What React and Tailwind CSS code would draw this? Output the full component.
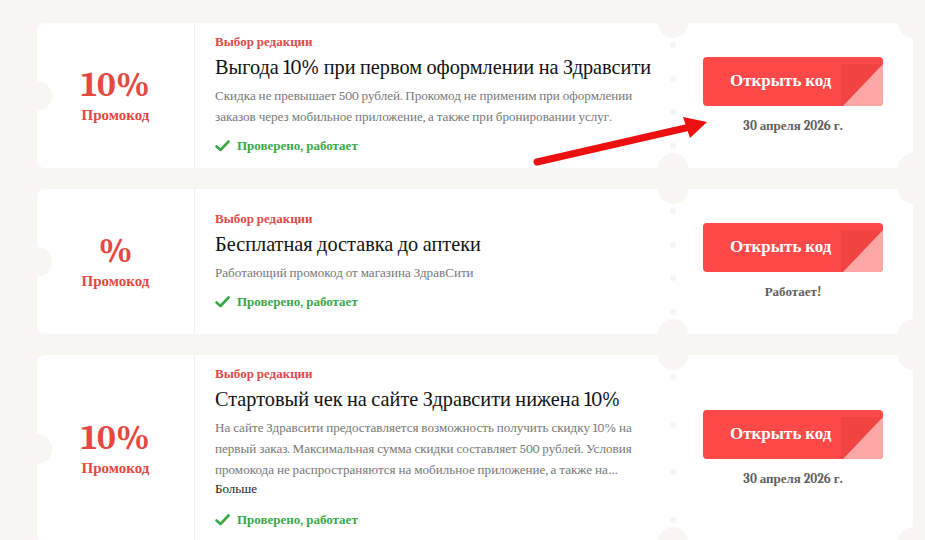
import React from 'react';

const coupons = [
  {
    value: '10%',
    label: 'Выбор редакции',
    title: 'Выгода 10% при первом оформлении на Здравсити',
    text: 'Скидка не превышает 500 рублей. Прокомод не применим при оформлении заказов через мобильное приложение, а также при бронировании услуг.',
    note: '30 апреля 2026 г.',
    more: false,
  },
  {
    value: '%',
    label: 'Выбор редакции',
    title: 'Бесплатная доставка до аптеки',
    text: 'Работающий промокод от магазина ЗдравСити',
    note: 'Работает!',
    more: false,
  },
  {
    value: '10%',
    label: 'Выбор редакции',
    title: 'Стартовый чек на сайте Здравсити нижена 10%',
    text: 'На сайте Здравсити предоставляется возможность получить скидку 10% на первый заказ. Максимальная сумма скидки составляет 500 рублей. Условия промокода не распространяются на мобильное приложение, а также на…',
    note: '30 апреля 2026 г.',
    more: true,
  },
];

const CheckIcon = () => (
  <svg width="15" height="12" viewBox="0 0 15 12" fill="none">
    <polyline points="1.5,6.5 5.5,10 13.5,1.5" stroke="#3aa845" strokeWidth="2.6" strokeLinecap="round" strokeLinejoin="round" />
  </svg>
);

const Coupon = ({ coupon }) => {
  return (
    <div className="relative flex min-h-[145px] w-[876px] rounded-l-lg bg-white">
      {/* notches */}
      <div className="absolute left-[-15px] top-1/2 h-[30px] w-[30px] -translate-y-1/2 rounded-full bg-[#f7f6f2]"></div>
      <div className="absolute left-[621px] top-[-15px] h-[30px] w-[30px] rounded-full bg-[#f7f6f2]"></div>
      <div className="absolute bottom-[-15px] left-[621px] h-[30px] w-[30px] rounded-full bg-[#f7f6f2]"></div>
      <div className="absolute right-[-15px] top-[-15px] h-[30px] w-[30px] rounded-full bg-[#f7f6f2]"></div>
      <div className="absolute bottom-[-15px] right-[-15px] h-[30px] w-[30px] rounded-full bg-[#f7f6f2]"></div>
      <div className="absolute bottom-[19px] left-[633px] top-[19px] flex flex-col justify-between">
        <span className="h-[6px] w-[6px] rounded-full bg-[#f5f4f0]"></span>
        <span className="h-[6px] w-[6px] rounded-full bg-[#f5f4f0]"></span>
        <span className="h-[6px] w-[6px] rounded-full bg-[#f5f4f0]"></span>
        <span className="h-[6px] w-[6px] rounded-full bg-[#f5f4f0]"></span>
      </div>

      {/* value */}
      <div className="flex w-[158px] shrink-0 flex-col items-center justify-center border-r border-[#eeeeee] pt-[3px] font-bold text-[#e5483f]">
        <div className="text-[35px] leading-[36px]">{coupon.value}</div>
        <div className="text-[15px] leading-[24px]">Промокод</div>
      </div>

      {/* body */}
      <div className="flex w-[475px] shrink-0 flex-col justify-center pb-[12px] pl-[20px] pt-[9px]">
        <div className="text-[13px] font-bold leading-[20px] text-[#dc4b4b]">{coupon.label}</div>
        <div className="mt-[2px] text-[20.3px] leading-[28px] text-[#111111]">{coupon.title}</div>
        <div className="mt-[3px] pr-[20px] text-[13.1px] leading-[21px] text-[#777777]">{coupon.text}</div>
        {coupon.more && <div className="text-[13px] leading-[18px] text-[#222222]">Больше</div>}
        <div className={`flex items-center gap-[7px] ${coupon.more ? 'mt-[12px]' : 'mt-[9px]'}`}>
          <CheckIcon />
          <span className="text-[13px] font-bold leading-[20px] text-[#3aa845]">Проверено, работает</span>
        </div>
      </div>

      {/* action */}
      <div className="flex flex-1 flex-col justify-center pl-[33px]">
        <button className="relative h-[49px] w-[180px] overflow-hidden rounded-[4px] bg-[#ff4848] pl-[27px] text-left text-[17px] font-bold text-white">
          Открыть код
          <svg className="absolute bottom-0 right-0" width="42" height="42" viewBox="0 0 42 42">
            <polygon points="0,0 42,0 2,42 0,42" fill="#f24343" />
            <polygon points="42,0 42,42 2,42" fill="#ffa6a6" />
          </svg>
        </button>
        <div className="mt-[11px] w-[180px] text-center text-[13px] font-bold leading-[18px] text-[#5f5f5f]">
          {coupon.note}
        </div>
      </div>
    </div>
  );
};

const App = () => {
  return (
    <div className="relative h-[540px] w-[925px] overflow-hidden bg-[#f7f6f2] font-serif [font-family:'Liberation_Serif',serif]">
      <div className="flex flex-col gap-[21px] pl-[37px] pt-[23px]">
        {coupons.map((c, i) => (
          <Coupon key={i} coupon={c} />
        ))}
      </div>

      {/* arrow */}
      <svg className="pointer-events-none absolute left-0 top-0" width="925" height="540">
        <line x1="537" y1="162" x2="690" y2="127" stroke="#ee1010" strokeWidth="7" strokeLinecap="round" />
        <polygon points="707,122 683,117 690,138" fill="#ee1010" />
      </svg>
    </div>
  );
};

export default App;
